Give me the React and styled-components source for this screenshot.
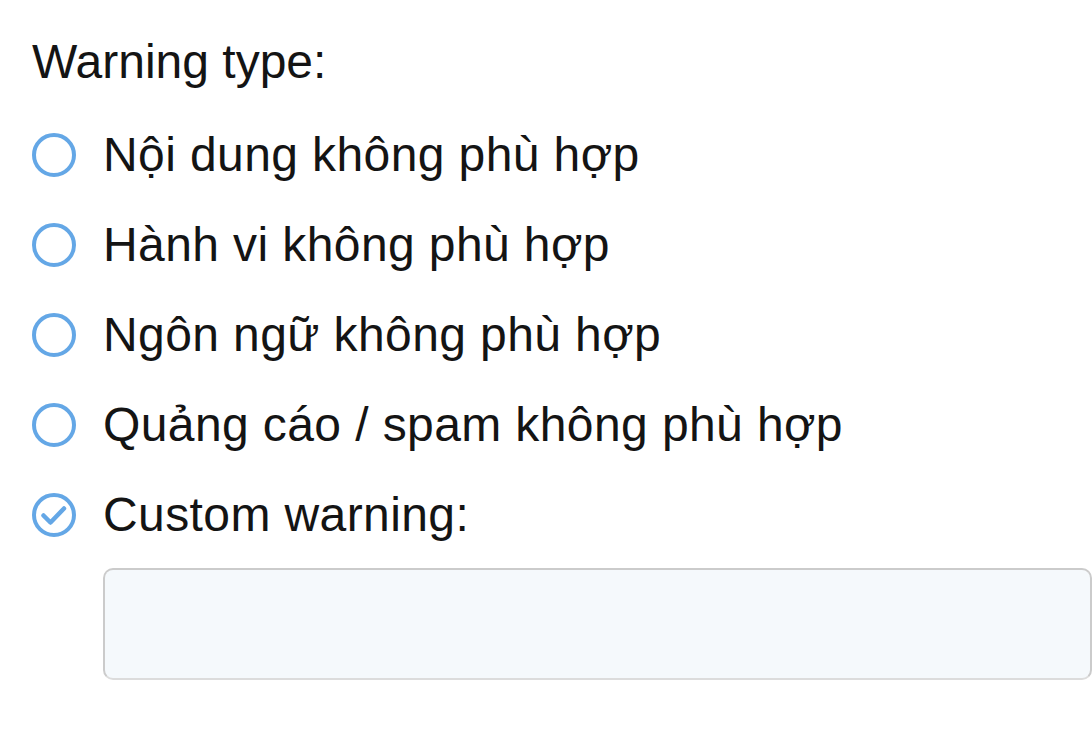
import React, { useState } from 'react';
import styled, { createGlobalStyle } from 'styled-components';

const GlobalStyle = createGlobalStyle`
  body {
    margin: 0;
    background: #ffffff;
    font-family: "Liberation Sans", Arial, sans-serif;
  }
`;

const options = [
  'Nội dung không phù hợp',
  'Hành vi không phù hợp',
  'Ngôn ngữ không phù hợp',
  'Quảng cáo / spam không phù hợp',
  'Custom warning:',
];

const RadioIcon = ({ checked }) => (
  <svg width="44" height="44" viewBox="0 0 44 44">
    <circle cx="22" cy="22" r="20" fill="none" stroke="#64a7e6" strokeWidth="4" />
    {checked && (
      <path
        d="M11.5 22.5 L18.5 29.5 L32 15.5"
        fill="none"
        stroke="#64a7e6"
        strokeWidth="4.5"
        strokeLinecap="round"
        strokeLinejoin="round"
      />
    )}
  </svg>
);

const App = () => {
  const [selected, setSelected] = useState(4);
  const [custom, setCustom] = useState('');

  return (
    <>
      <GlobalStyle />
      <Form>
        <Title>Warning type:</Title>
        <OptionList>
          {options.map((label, i) => (
            <OptionRow key={label} onClick={() => setSelected(i)}>
              <RadioIcon checked={selected === i} />
              <OptionLabel>{label}</OptionLabel>
            </OptionRow>
          ))}
        </OptionList>
        <CustomInput
          value={custom}
          onChange={e => setCustom(e.target.value)}
        />
      </Form>
    </>
  );
};

export default App;

const Form = styled.div`
  padding: 34px 0 0 32px;
  display: flex;
  flex-direction: column;
  color: #141414;
`;

const Title = styled.div`
  font-size: 48px;
  line-height: 56px;
`;

const OptionList = styled.div`
  margin-top: 20px;
  display: flex;
  flex-direction: column;
`;

const OptionRow = styled.div`
  height: 90px;
  display: flex;
  align-items: center;
  gap: 27px;
  cursor: pointer;

  svg {
    flex-shrink: 0;
  }
`;

const OptionLabel = styled.span`
  font-size: 48px;
  line-height: 56px;
  letter-spacing: 0.4px;
`;

const CustomInput = styled.textarea`
  margin: 8px 0 0 71px;
  width: 989px;
  height: 112px;
  box-sizing: border-box;
  border: 2px solid #cbcbcb;
  border-bottom-color: #dcdcdc;
  border-radius: 10px;
  background: #f5f9fc;
  resize: none;
  outline: none;
  font-family: inherit;
  font-size: 40px;
`;
